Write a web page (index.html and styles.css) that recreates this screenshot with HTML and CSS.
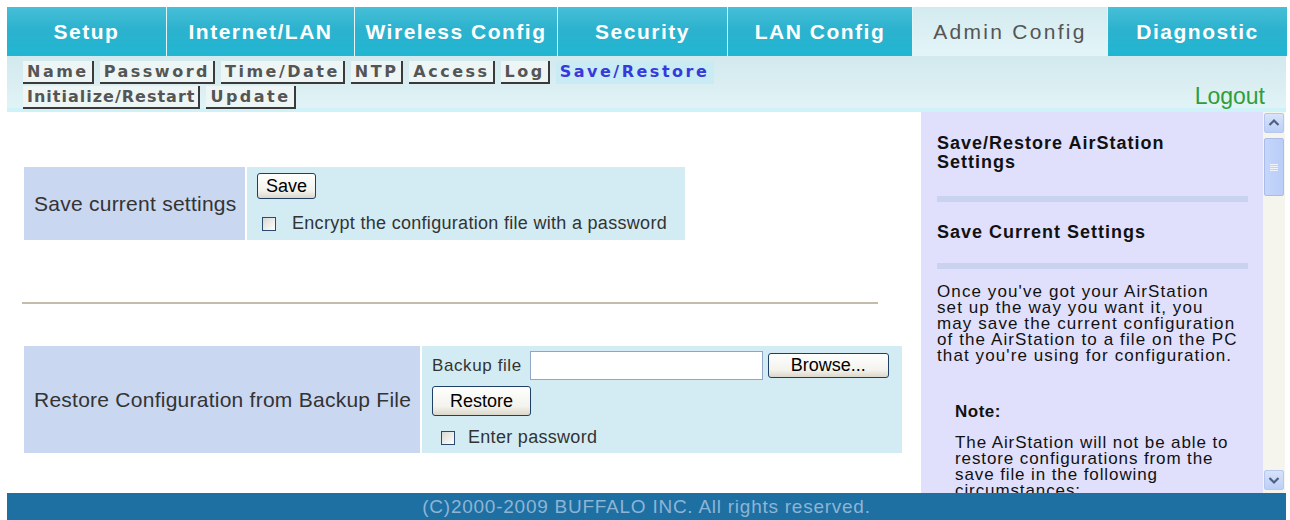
FILE: index.html
```html
<!DOCTYPE html>
<html>
<head>
<meta charset="utf-8">
<title>Save/Restore</title>
<link rel="stylesheet" href="styles.css">
</head>
<body>
<div class="page">
  <nav class="tabs">
    <a class="tab">Setup</a>
    <a class="tab">Internet/LAN</a>
    <a class="tab">Wireless Config</a>
    <a class="tab">Security</a>
    <a class="tab">LAN Config</a>
    <a class="tab active">Admin Config</a>
    <a class="tab">Diagnostic</a>
  </nav>
  <div class="subnav">
    <div class="sublinks">
      <div class="subrow">
        <a class="sl">Name</a>
        <a class="sl">Password</a>
        <a class="sl">Time/Date</a>
        <a class="sl">NTP</a>
        <a class="sl">Access</a>
        <a class="sl">Log</a>
        <a class="sl cur">Save/Restore</a>
      </div>
      <div class="subrow">
        <a class="sl tight">Initialize/Restart</a>
        <a class="sl">Update</a>
      </div>
    </div>
    <a class="logout">Logout</a>
  </div>
  <div class="main">
    <div class="content">
      <div class="frow save-row">
        <div class="flabel save-label">Save current settings</div>
        <div class="fvalue save-value">
          <button class="btn btn-save">Save</button>
          <label class="chk"><input type="checkbox" class="cb"><span>Encrypt the configuration file with a password</span></label>
        </div>
      </div>
      <hr class="divider">
      <div class="frow restore-row">
        <div class="flabel restore-label">Restore Configuration from Backup File</div>
        <div class="fvalue restore-value">
          <div class="fileline">
            <span class="small">Backup file</span>
            <input type="text" class="file-input">
            <button class="btn btn-browse">Browse...</button>
          </div>
          <button class="btn btn-restore">Restore</button>
          <label class="chk chk-restore"><input type="checkbox" class="cb"><span>Enter password</span></label>
        </div>
      </div>
    </div>
    <aside class="help">
      <div class="help-body">
        <h3 class="help-title">Save/Restore AirStation Settings</h3>
        <div class="help-sep"></div>
        <h3 class="help-sub">Save Current Settings</h3>
        <div class="help-sep sep2"></div>
        <p class="help-text">Once you've got your AirStation set up the way you want it, you may save the current configuration of the AirStation to a file on the PC that you're using for configuration.</p>
        <div class="note">
          <div class="note-title">Note:</div>
          <p class="note-text">The AirStation will not be able to restore configurations from the save file in the following circumstances:</p>
        </div>
      </div>
      <div class="scrollbar">
        <div class="sb-btn">
          <svg width="20" height="20" viewBox="0 0 20 20"><polyline points="5.5,12 10,7.5 14.5,12" fill="none" stroke="#4d6185" stroke-width="2.2"/></svg>
        </div>
        <div class="sb-thumb">
          <svg width="10" height="10" viewBox="0 0 10 10"><path d="M1 2.5H9M1 4.5H9M1 6.5H9M1 8.5H9" stroke="#eef3fd" stroke-width="1"/></svg>
        </div>
        <div class="sb-track"></div>
        <div class="sb-btn">
          <svg width="20" height="20" viewBox="0 0 20 20"><polyline points="5.5,8 10,12.5 14.5,8" fill="none" stroke="#4d6185" stroke-width="2.2"/></svg>
        </div>
      </div>
    </aside>
  </div>
  <footer class="footer">(C)2000-2009 BUFFALO INC. All rights reserved.</footer>
</div>
</body>
</html>
```
FILE: styles.css
```css
html, body {
  margin: 0;
  padding: 0;
  background: #ffffff;
  overflow: hidden;
}
body {
  padding: 7px 0 0 7px;
  font-family: "Liberation Sans", Arial, sans-serif;
  color: #333;
}
.page {
  width: 1279px;
}

/* top tabs */
.tabs {
  display: grid;
  grid-template-columns: 159px 187px 202px 169px 184px 194px 179px;
  column-gap: 1px;
  height: 49px;
  background: #e3f4f7;
}
.tab {
  display: flex;
  align-items: center;
  justify-content: center;
  color: #ffffff;
  font-weight: bold;
  font-size: 21px;
  letter-spacing: 1.5px;
  background: linear-gradient(#47bfd8, #2cb2ce 45%, #21b6d2);
}
.tab.active {
  background: linear-gradient(#d3ebef, #e4f5f8);
  color: #555;
  font-weight: normal;
  letter-spacing: 2.3px;
}

/* sub navigation */
.subnav {
  display: flex;
  justify-content: space-between;
  height: 47px;
  padding: 5px 0 0 16px;
  background: linear-gradient(#d2e9ed, #e1f3f6);
  border-bottom: 4px solid #cff2f8;
}
.subrow {
  display: flex;
  gap: 6px;
  height: 23px;
  margin-bottom: 2px;
}
.sl {
  font-family: "DejaVu Sans", Verdana, sans-serif;
  font-weight: bold;
  font-size: 16px;
  letter-spacing: 2.5px;
  color: #555;
  background: #eef6f5;
  padding: 0 3px 0 4px;
  line-height: 21px;
  border-right: 2px solid #3a3a3a;
  border-bottom: 2px solid #3a3a3a;
}
.sl.tight {
  letter-spacing: 1px;
}
.sl.cur {
  color: #3838dc;
  background: #c9ecf4;
  border-color: transparent;
}
.logout {
  align-self: flex-end;
  color: #2e9e3c;
  font-size: 23px;
  margin: 0 21px -2px 0;
}

/* main */
.main {
  display: flex;
  height: 381px;
}
.content {
  width: 897px;
  padding: 55px 0 0 17px;
}
.frow {
  display: flex;
  gap: 2px;
}
.flabel {
  display: flex;
  align-items: center;
  padding-left: 10px;
  background: #c9d7f1;
  font-size: 21px;
  letter-spacing: 0.25px;
  color: #333;
}
.fvalue {
  background: #d3ecf3;
  padding: 6px 10px;
}
.save-row { height: 73px; }
.save-label { width: 211px; }
.save-value { width: 418px; }

.btn {
  font-family: "Liberation Sans", Arial, sans-serif;
  font-size: 18px;
  color: #000;
  border: 1px solid #1f3f66;
  border-radius: 3px;
  background: linear-gradient(#ffffff, #f3f2ec 70%, #dcd7cb);
  padding: 0;
}
.btn-save {
  width: 59px;
  height: 26px;
  display: block;
}
.chk {
  display: flex;
  align-items: center;
  margin: 14px 0 0 5px;
  font-size: 18px;
  letter-spacing: 0.3px;
  color: #333;
}
.cb {
  appearance: none;
  -webkit-appearance: none;
  flex: none;
  width: 14px;
  height: 14px;
  margin: 0 16px 0 0;
  border: 1px solid #2b4a70;
  background: linear-gradient(135deg, #d8d8d2, #ffffff);
}

.divider {
  width: 856px;
  margin: 62px 0 0 -2px;
  height: 0;
  border: 0;
  border-top: 2px solid #c3bcab;
}
.restore-row {
  height: 107px;
  margin-top: 42px;
}
.restore-label { width: 386px; }
.restore-value {
  width: 460px;
  padding: 5px 10px;
}
.fileline {
  display: flex;
  align-items: center;
  height: 29px;
}
.small {
  font-size: 17px;
  letter-spacing: 0.6px;
  color: #333;
}
.file-input {
  width: 233px;
  height: 29px;
  box-sizing: border-box;
  margin: 0 5px 0 8px;
  border: 1px solid #8fa6c4;
  background: #fff;
}
.btn-browse {
  width: 121px;
  height: 25px;
}
.btn-restore {
  display: block;
  width: 99px;
  height: 30px;
  margin-top: 6px;
}
.chk-restore {
  margin: 11px 0 0 9px;
}
.chk-restore .cb {
  margin-right: 13px;
}

/* help side */
.help {
  width: 364px;
  display: flex;
}
.help-body {
  width: 311px;
  padding: 22px 15px 0 16px;
  background: #e0e0fc;
  overflow: hidden;
  color: #111;
}
.help-title, .help-sub {
  margin: 0;
  font-size: 18px;
  line-height: 19px;
  letter-spacing: 1px;
  font-weight: bold;
}
.help-sep {
  height: 6px;
  background: #c9d2ee;
  margin-top: 24px;
}
.help-sub {
  margin-top: 21px;
}
.help-sep.sep2 {
  margin-top: 21px;
}
.help-text {
  width: 303px;
  margin: 15px 0 0 0;
  font-size: 17px;
  line-height: 16px;
  letter-spacing: 1.1px;
}
.note {
  margin: 40px 8px 0 18px;
}
.note-title {
  font-weight: bold;
  font-size: 17px;
  line-height: 16px;
  letter-spacing: 0.5px;
}
.note-text {
  margin: 15px 0 0 0;
  font-size: 17px;
  line-height: 16px;
  letter-spacing: 0.9px;
}

.scrollbar {
  width: 22px;
  display: flex;
  flex-direction: column;
  align-items: center;
  background: #f5f5ee;
  padding-top: 1px;
}
.sb-btn {
  width: 20px;
  height: 20px;
  box-sizing: border-box;
  border: 1px solid #b6c8ee;
  border-radius: 2px;
  background: linear-gradient(#d8e3fb, #bccff6);
}
.sb-btn svg { display: block; margin: -1px; }
.sb-thumb {
  width: 20px;
  height: 58px;
  box-sizing: border-box;
  margin-top: 5px;
  border: 1px solid #a9bde8;
  border-radius: 2px;
  background: linear-gradient(90deg, #c6d6fb, #b9cdf7);
  display: flex;
  align-items: center;
  justify-content: center;
}
.sb-track {
  flex: 1;
}
.scrollbar .sb-btn:last-child {
  margin-bottom: 3px;
}

.footer {
  height: 30px;
  background: #1e6fa2;
  color: #8db5d5;
  font-size: 19px;
  letter-spacing: 0.75px;
  line-height: 27px;
  text-align: center;
}
```
